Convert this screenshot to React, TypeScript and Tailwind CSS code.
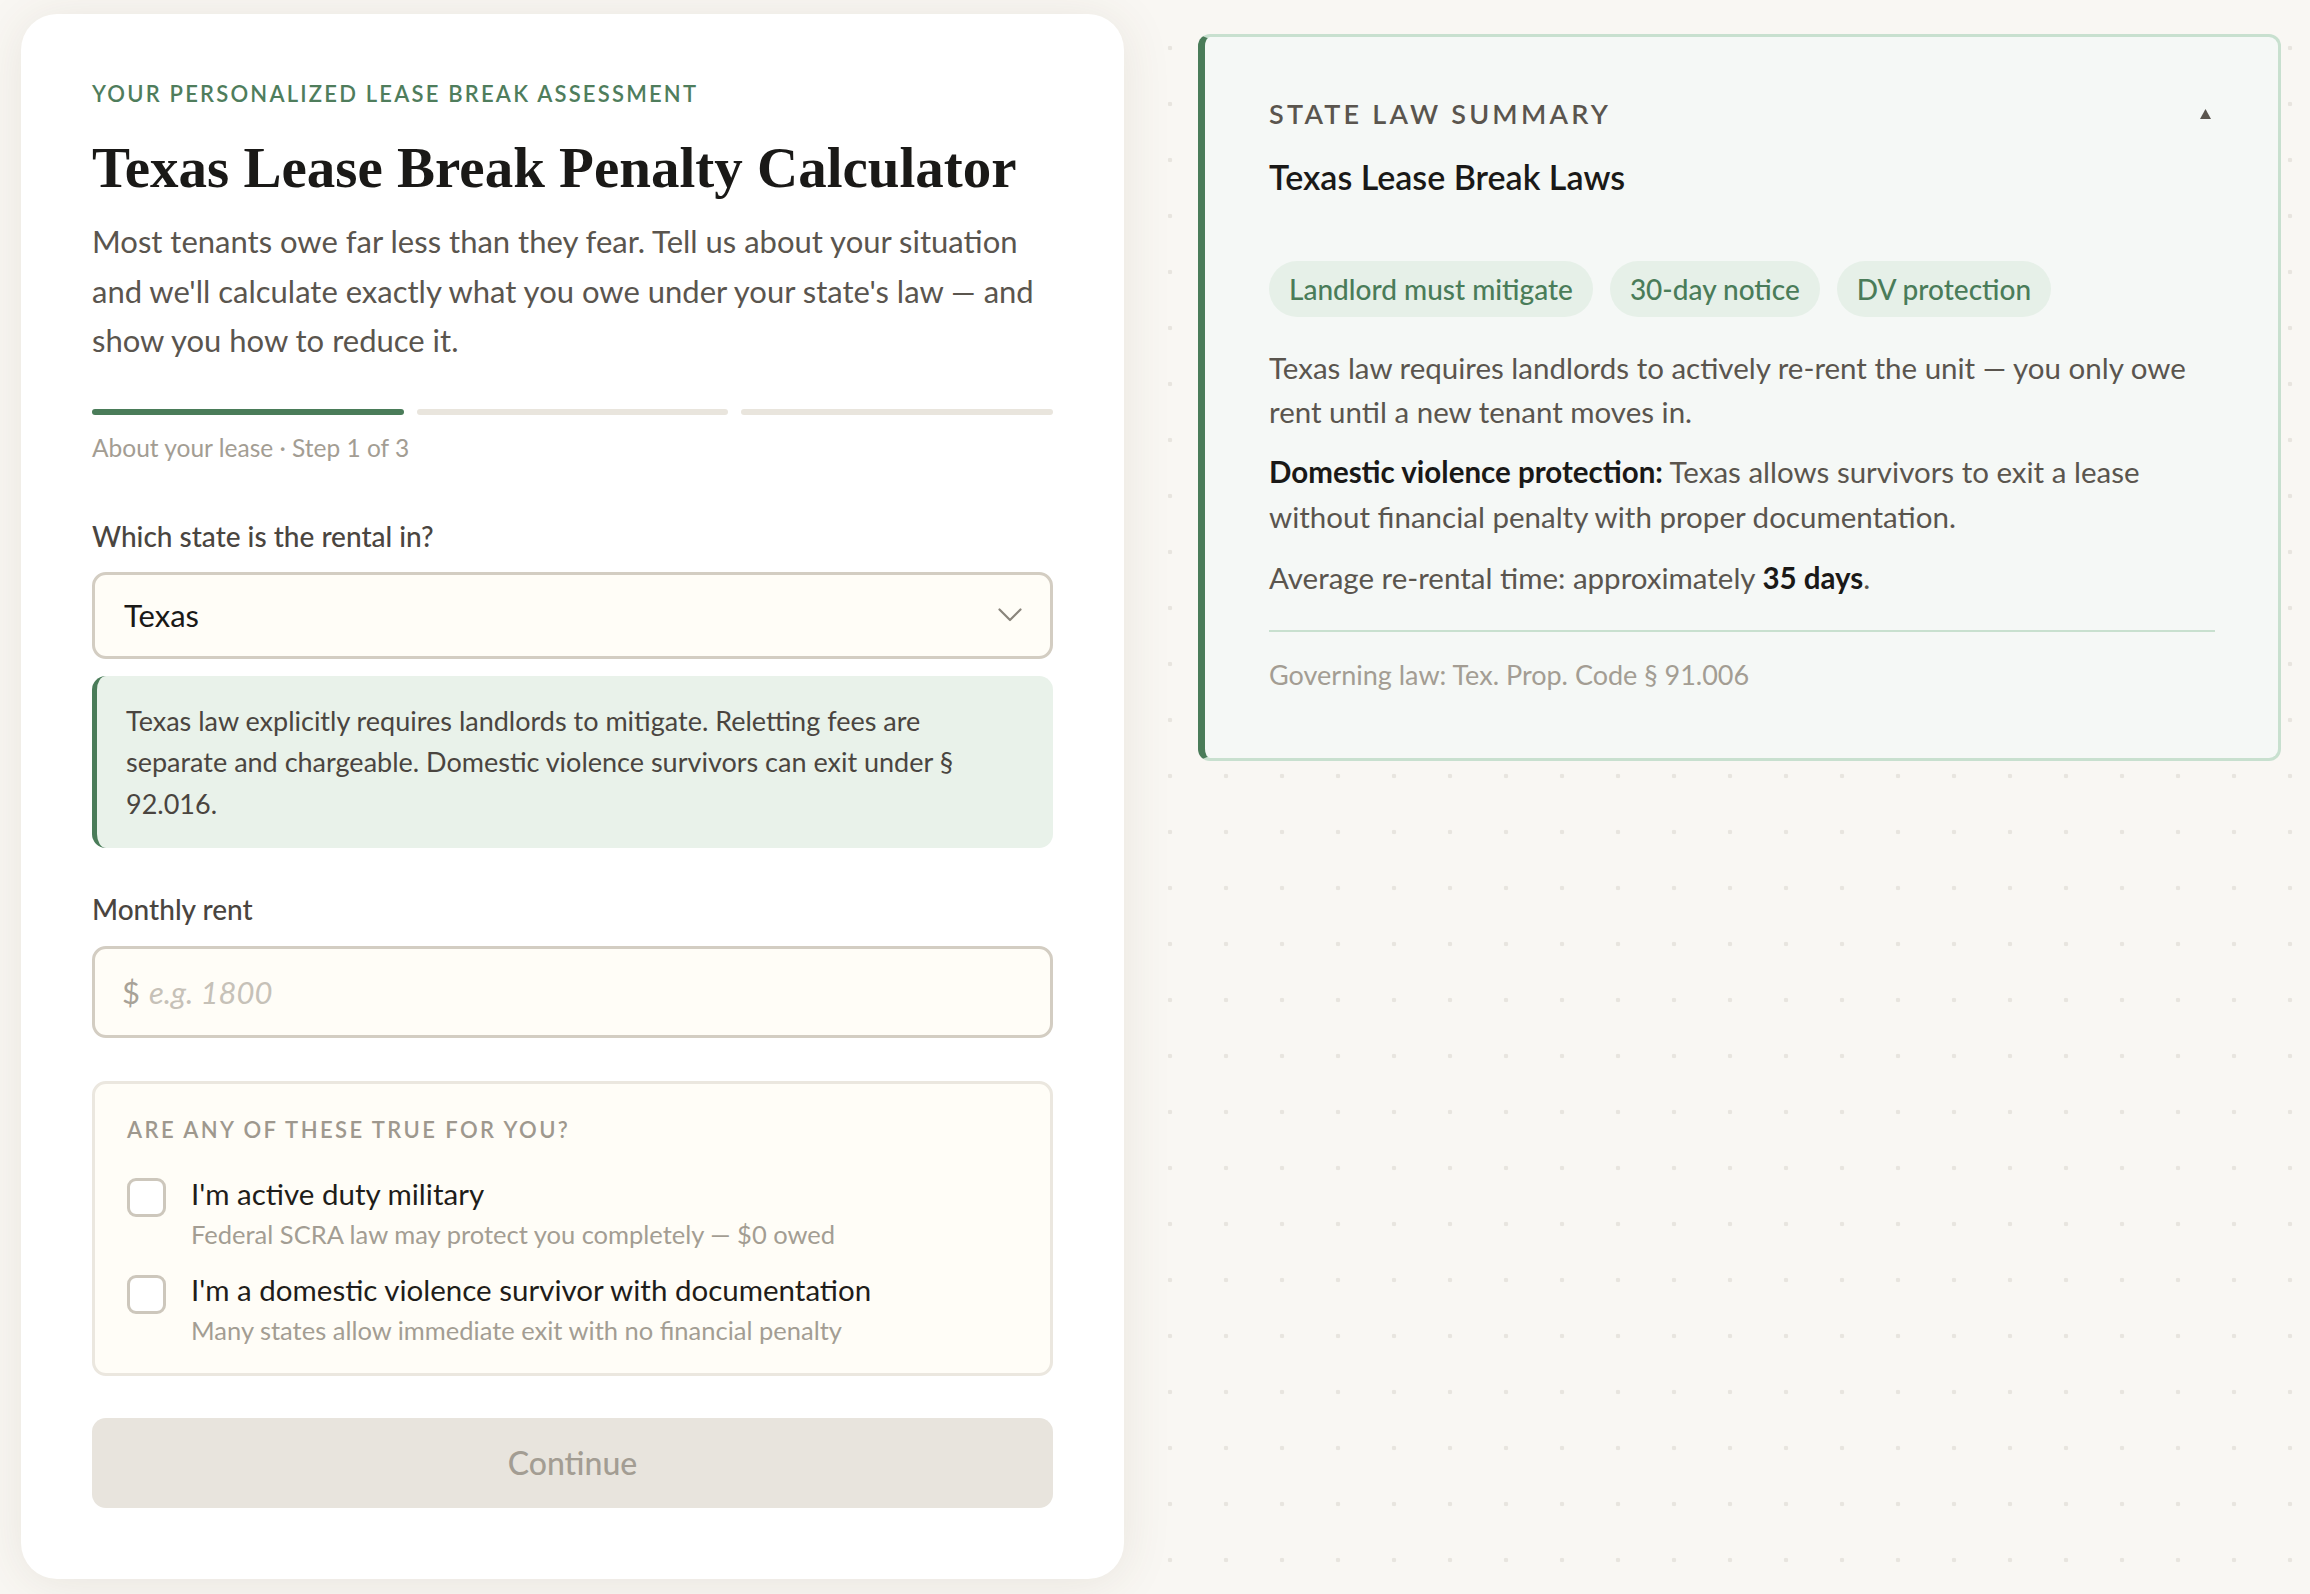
import React from "react";

function Chevron() {
  return (
    <svg width="24" height="14" viewBox="0 0 24 14" fill="none">
      <path d="M1.5 1.5 L12 12 L22.5 1.5" stroke="#8a857c" strokeWidth="2.2" strokeLinecap="round" strokeLinejoin="round" />
    </svg>
  );
}

function CheckItem({ label, sub, boxMt }: { label: string; sub: string; boxMt: string }) {
  return (
    <div className="flex gap-[25px]">
      <div className={`w-[39px] h-[39px] shrink-0 rounded-[9px] border-[3px] border-[#cdc7bc] bg-white ${boxMt}`} />
      <div className="flex flex-col">
        <div className="text-[29.5px] leading-[36px] text-[#1f1d1a]">{label}</div>
        <div className="mt-[6px] text-[25.5px] leading-[32px] text-[#a39d93]">{sub}</div>
      </div>
    </div>
  );
}

export default function App() {
  return (
    <div className="min-h-screen w-full bg-[#f9f7f3] bg-[radial-gradient(circle,#e8e5df_2px,transparent_2.6px)] bg-[length:56px_56px] bg-[position:22px_20px] font-['Lato',sans-serif]">
      <div className="flex items-start pl-[21px] pr-[29px] pt-[14px] gap-[74px]">
        {/* Left card */}
        <div className="w-[1103px] shrink-0 rounded-[36px] bg-white shadow-[0_4px_50px_rgba(90,70,40,0.10)] px-[71px] pt-[65px] pb-[71px]">
          <div className="text-[22px] leading-[30px] font-semibold tracking-[0.1em] text-[#4f7d5c]">
            YOUR PERSONALIZED LEASE BREAK ASSESSMENT
          </div>
          <h1 className="mt-[27px] font-['Liberation_Serif',serif] font-bold text-[57px] leading-[64px] text-[#1a1917]">
            Texas Lease Break Penalty Calculator
          </h1>
          <p className="mt-[17px] text-[31px] leading-[49.5px] text-[#5a554e]">
            Most tenants owe far less than they fear. Tell us about your situation and we'll calculate exactly what you owe under your state's law — and show you how to reduce it.
          </p>

          <div className="mt-[43px] flex gap-[13px]">
            <div className="h-[6px] flex-1 rounded-full bg-[#4a7c59]" />
            <div className="h-[6px] flex-1 rounded-full bg-[#e9e5dd]" />
            <div className="h-[6px] flex-1 rounded-full bg-[#e9e5dd]" />
          </div>
          <div className="mt-[18px] text-[24.5px] leading-[30px] text-[#a39d93]">About your lease · Step 1 of 3</div>

          <div className="mt-[55px] text-[28px] leading-[36px] font-medium text-[#4a4540]">Which state is the rental in?</div>
          <div className="mt-[18px] h-[87px] rounded-[14px] border-[3px] border-[#d3cdc2] bg-[#fffdf7] flex items-center justify-between pl-[29px] pr-[28px]">
            <span className="text-[31px] text-[#1a1917]">Texas</span>
            <Chevron />
          </div>

          <div className="mt-[17px] rounded-[14px] border-l-[5px] border-[#4a7c59] bg-[#e9f2ea] pl-[29px] pr-[30px] pt-[24px] pb-[24px] text-[27px] leading-[41.5px] text-[#4a4540]">
            Texas law explicitly requires landlords to mitigate. Reletting fees are separate and chargeable. Domestic violence survivors can exit under § 92.016.
          </div>

          <div className="mt-[43px] text-[28px] leading-[36px] font-medium text-[#4a4540]">Monthly rent</div>
          <div className="mt-[19px] h-[92px] rounded-[14px] border-[3px] border-[#d3cdc2] bg-[#fffdf7] flex items-center pl-[27px]">
            <span className="text-[31px] text-[#a8a297]">$</span>
            <span className="ml-[9px] text-[31px] italic text-[#c6c1b8]">e.g. 1800</span>
          </div>

          <div className="mt-[43px] rounded-[14px] border-[3px] border-[#ebe7df] bg-[#fffdf7] pl-[32px] pr-[32px] pt-[31px] pb-[27px]">
            <div className="text-[22px] leading-[30px] font-semibold tracking-[0.11em] text-[#9e988e]">ARE ANY OF THESE TRUE FOR YOU?</div>
            <div className="mt-[31px]">
              <CheckItem boxMt="mt-[2px]" label="I'm active duty military" sub="Federal SCRA law may protect you completely — $0 owed" />
            </div>
            <div className="mt-[22px]">
              <CheckItem boxMt="mt-[3px]" label="I'm a domestic violence survivor with documentation" sub="Many states allow immediate exit with no financial penalty" />
            </div>
          </div>

          <button className="mt-[42px] w-full h-[90px] rounded-[14px] bg-[#e8e4dd] text-[32px] font-medium text-[#a39d93]">
            Continue
          </button>
        </div>

        {/* Right panel */}
        <div className="flex-1 mt-[20px] rounded-[12px] border-[3px] border-l-[7px] border-[#c8e0cf] border-l-[#4a7c59] bg-[#f5f8f6] pl-[64px] pr-[63px] pt-[59px] pb-[65px]">
          <div className="flex items-center justify-between">
            <div className="text-[27px] leading-[36px] font-semibold tracking-[0.12em] text-[#5a554e]">STATE LAW SUMMARY</div>
            <svg width="11" height="10" viewBox="0 0 11 10" className="mr-[4px]">
              <polygon points="5.5,0 11,10 0,10" fill="#5a554e" />
            </svg>
          </div>
          <div className="mt-[25px] text-[34px] leading-[40px] font-semibold text-[#1a1917]">Texas Lease Break Laws</div>

          <div className="mt-[64px] flex gap-[17px]">
            <span className="h-[56px] px-[20px] rounded-full bg-[#e6f0e8] flex items-center text-[28px] font-medium text-[#4a7c59]">Landlord must mitigate</span>
            <span className="h-[56px] px-[20px] rounded-full bg-[#e6f0e8] flex items-center text-[28px] font-medium text-[#4a7c59]">30-day notice</span>
            <span className="h-[56px] px-[20px] rounded-full bg-[#e6f0e8] flex items-center text-[28px] font-medium text-[#4a7c59]">DV protection</span>
          </div>

          <p className="mt-[29px] text-[29.5px] leading-[44px] text-[#5a554e]">
            Texas law requires landlords to actively re-rent the unit — you only owe rent until a new tenant moves in.
          </p>
          <p className="mt-[15px] text-[29.5px] leading-[45px] text-[#5a554e]">
            <strong className="font-bold text-[#1a1917]">Domestic violence protection:</strong> Texas allows survivors to exit a lease without financial penalty with proper documentation.
          </p>
          <p className="mt-[17px] text-[29.5px] leading-[44px] text-[#5a554e]">
            Average re-rental time: approximately <strong className="font-bold text-[#1a1917]">35 days</strong>.
          </p>

          <div className="mt-[30px] h-[2px] bg-[#c8e0cf]" />
          <div className="mt-[25px] text-[27px] leading-[36px] text-[#a39d93]">Governing law: Tex. Prop. Code § 91.006</div>
        </div>
      </div>
    </div>
  );
}
